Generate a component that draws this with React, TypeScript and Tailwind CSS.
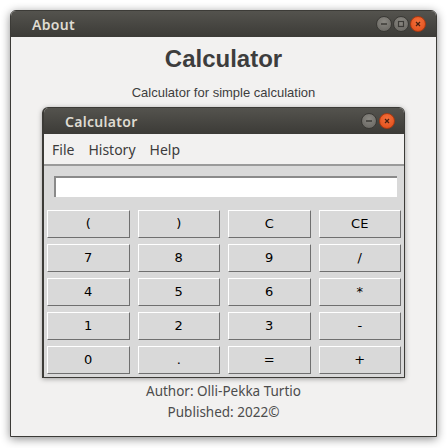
const keys = ['(', ')', 'C', 'CE', '7', '8', '9', '/', '4', '5', '6', '*', '1', '2', '3', '-', '0', '.', '=', '+'];

const TitleButton = ({ kind }: { kind: 'min' | 'max' | 'close' }) => {
  const isClose = kind === 'close';
  return (
    <div
      className={`w-[16px] h-[16px] rounded-full flex items-center justify-center border ${
        isClose
          ? 'bg-[radial-gradient(circle_at_50%_35%,#f4713c,#df4a17)] border-[#a93a12]'
          : 'bg-[radial-gradient(circle_at_50%_35%,#8a8882,#65635e)] border-[#3a3935]'
      }`}
    >
      <svg width="10" height="10" viewBox="0 0 10 10">
        {kind === 'min' && <line x1="2" y1="5" x2="8" y2="5" stroke="#3c3b37" strokeWidth="1.4" />}
        {kind === 'max' && <rect x="2.5" y="2.5" width="5" height="5" fill="none" stroke="#3c3b37" strokeWidth="1.2" />}
        {kind === 'close' && (
          <g stroke="#4a2010" strokeWidth="1.3">
            <line x1="3" y1="3" x2="7" y2="7" />
            <line x1="7" y1="3" x2="3" y2="7" />
          </g>
        )}
      </svg>
    </div>
  );
};

const CalcKey = ({ label }: { label: string }) => (
  <div className="h-[28px] flex items-center justify-center bg-[#d9d9d9] border-t border-l border-t-white border-l-white border-b border-r border-b-[#6f6f6f] border-r-[#6f6f6f] font-['DejaVu_Sans',sans-serif] text-[13px] text-black">
    {label}
  </div>
);

const App = () => {
  return (
    <div className="w-[447px] h-[448px] bg-white p-[10px] overflow-hidden">
      <div className="w-[427px] h-[427px] flex flex-col bg-[#f2f1f0] border border-[#3c3b37] rounded-t-[6px] shadow-[0_2px_10px_rgba(0,0,0,0.45)] overflow-hidden">
        {/* outer title bar */}
        <div className="h-[26px] shrink-0 flex items-center justify-between pl-[21px] pr-[10px] bg-gradient-to-b from-[#54534e] to-[#3c3b37]">
          <span className="font-['Noto_Sans',sans-serif] text-[14px] font-semibold text-[#dfdbd2] tracking-[0.3px]">About</span>
          <div className="flex items-center gap-[1px]">
            <TitleButton kind="min" />
            <TitleButton kind="max" />
            <TitleButton kind="close" />
          </div>
        </div>

        <div className="flex flex-col items-center">
          <h1 className="mt-[7px] h-[30px] leading-[30px] font-['Liberation_Sans',sans-serif] font-bold text-[24px] text-[#3d3d3d]">
            Calculator
          </h1>
          <p className="mt-[11px] h-[16px] leading-[16px] font-['Liberation_Sans',sans-serif] text-[13px] text-[#3d3d3d]">
            Calculator for simple calculation
          </p>

          {/* inner calculator window */}
          <div className="mt-[6px] w-[363px] h-[271px] flex flex-col border border-[#3c3b37] border-l-2 rounded-t-[6px] shadow-[0_1px_5px_rgba(0,0,0,0.35)] overflow-hidden">
            <div className="h-[26px] shrink-0 flex items-center justify-between pl-[21px] pr-[9px] bg-gradient-to-b from-[#54534e] to-[#3c3b37]">
              <span className="font-['Noto_Sans',sans-serif] text-[14px] font-semibold text-[#dfdbd2] tracking-[0.3px]">Calculator</span>
              <div className="flex items-center gap-[2px]">
                <TitleButton kind="min" />
                <TitleButton kind="close" />
              </div>
            </div>
            <div className="h-[32px] shrink-0 flex items-center gap-[14px] pl-[8px] bg-[#f2f1f0] border-b-2 border-[#9a9a9a] font-['Noto_Sans',sans-serif] text-[14px] text-[#3c3c3c]">
              <span>File</span>
              <span>History</span>
              <span>Help</span>
            </div>
            <div className="flex-1 flex flex-col bg-[#d9d9d9]">
              <div className="mt-[10px] ml-[10px] mr-[7px] h-[21px] bg-white border-t-2 border-l-2 border-[#8a8a8a]" />
              <div className="mt-[13px] mx-[3px] grid grid-cols-4 gap-x-[8px] gap-y-[6px]">
                {keys.map(k => (
                  <CalcKey key={k} label={k} />
                ))}
              </div>
            </div>
          </div>

          <p className="mt-[3px] h-[21px] leading-[21px] font-['Noto_Sans',sans-serif] text-[13.5px] text-[#4c4c4c]">
            Author: Olli-Pekka Turtio
          </p>
          <p className="h-[21px] leading-[21px] font-['Noto_Sans',sans-serif] text-[13.5px] text-[#4c4c4c]">
            Published: 2022©
          </p>
        </div>
      </div>
    </div>
  );
};

export default App;
